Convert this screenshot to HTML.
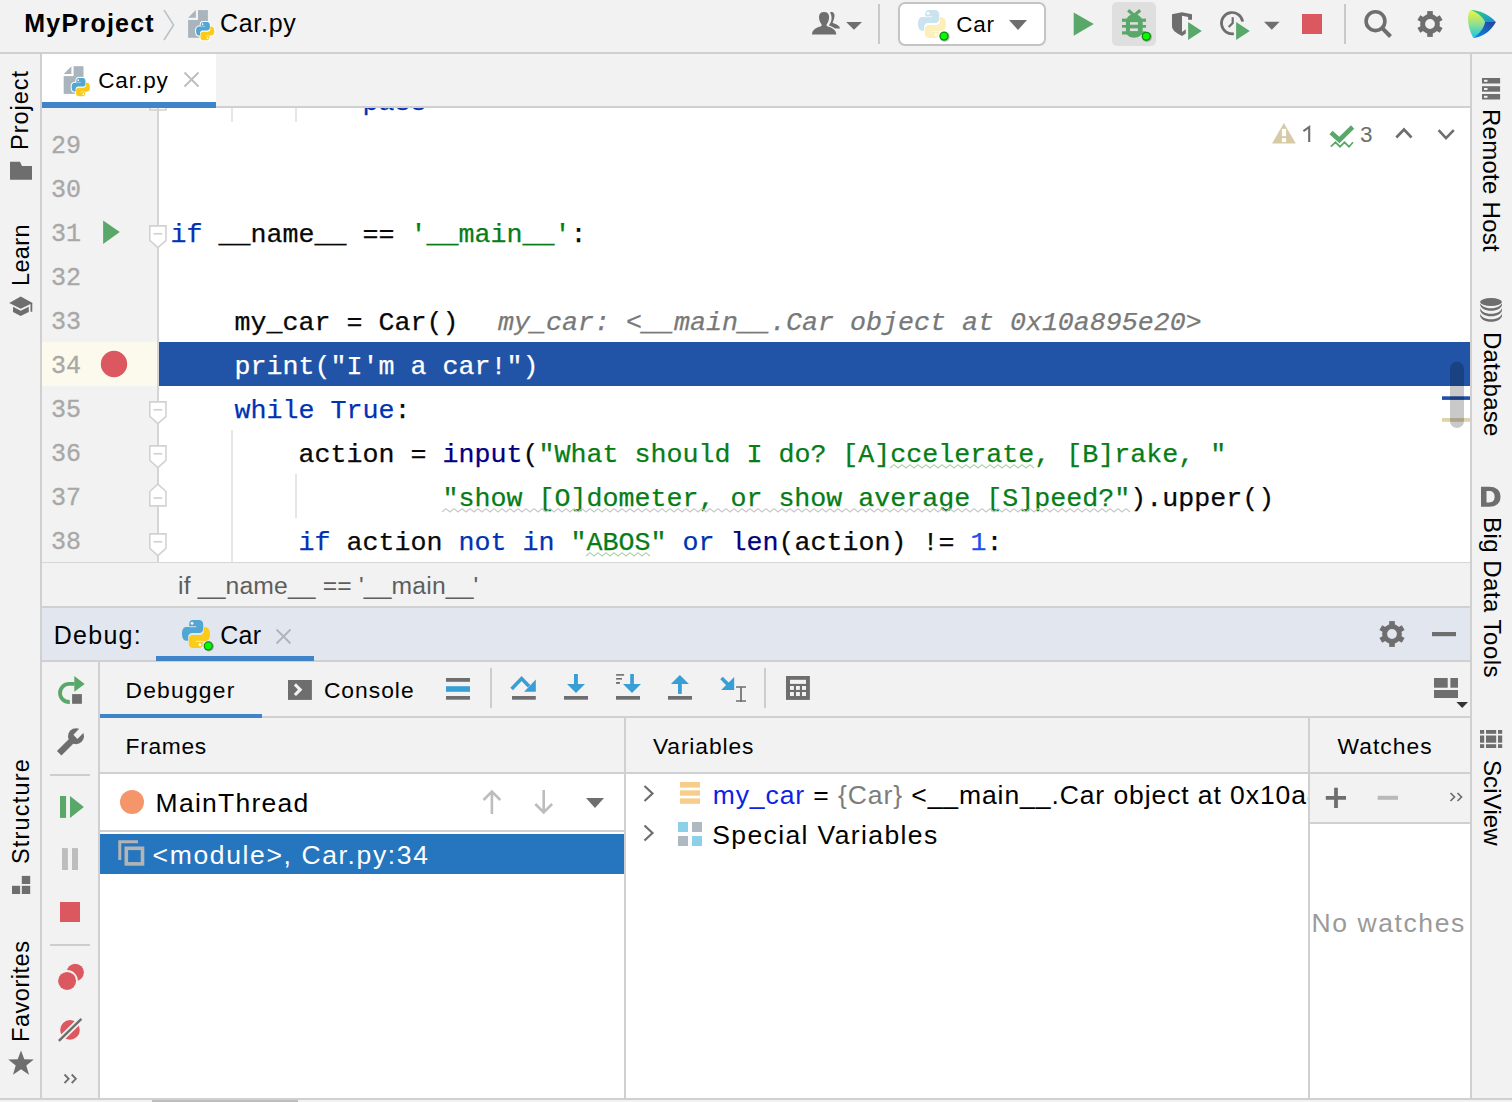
<!DOCTYPE html>
<html><head><meta charset="utf-8">
<style>
*{box-sizing:border-box}
html,body{margin:0;padding:0}
body{width:1512px;height:1102px;position:relative;overflow:hidden;background:#f2f2f2;font-family:"Liberation Sans",sans-serif;color:#000}
.a{position:absolute}
.t{position:absolute;white-space:pre;line-height:1}
.vl{position:absolute;transform-origin:0 0;white-space:pre;line-height:1}
.code{position:absolute;left:170.5px;font-family:"Liberation Mono",monospace;font-size:26.667px;line-height:44px;white-space:pre;color:#080808;height:44px;-webkit-text-stroke:0.25px currentColor}
.kw{color:#0033b3}.st{color:#067d17}.bi{color:#000080}.nu{color:#1750eb}
.ln{position:absolute;left:42px;width:39px;text-align:right;font-family:"Liberation Mono",monospace;font-size:25px;line-height:44px;color:#a8a8a8;height:44px;-webkit-text-stroke:0.3px #a8a8a8}
.bd{position:absolute;background:#d0d0d0}
</style></head><body>

<!-- ===== TOP BAR ===== -->
<div class="bd" style="left:0;top:52px;width:1512px;height:2px"></div>
<div class="t" style="left:24.3px;top:11px;font-size:25px;letter-spacing:1.237px;font-weight:bold">MyProject</div>
<div class="t" style="left:220px;top:11px;font-size:25px;letter-spacing:0.7px">Car.py</div>
<div class="a" style="left:878px;top:4px;width:2px;height:40px;background:#c9c9c9"></div>
<div class="a" style="left:898px;top:2px;width:148px;height:44px;background:#fff;border:2px solid #c4c4c4;border-radius:7px"></div>
<div class="t" style="left:956.3px;top:14px;font-size:22.5px;letter-spacing:0.7px">Car</div>
<div class="a" style="left:1112px;top:2px;width:44px;height:44px;background:#dfdfdf;border-radius:5px"></div>
<div class="a" style="left:1344px;top:4px;width:2px;height:40px;background:#c9c9c9"></div>

<!-- ===== STRIPS ===== -->
<div class="bd" style="left:40px;top:54px;width:2px;height:1044px"></div>
<div class="bd" style="left:1470px;top:54px;width:2px;height:1044px"></div>
<div class="vl" style="left:9.4px;top:150.2px;font-size:23.5px;letter-spacing:1.0px;transform:rotate(-90deg)">Project</div>
<div class="vl" style="left:9.5px;top:286.2px;font-size:23.5px;letter-spacing:0.35px;transform:rotate(-90deg)">Learn</div>
<div class="vl" style="left:9.6px;top:864px;font-size:23.5px;letter-spacing:1.188px;transform:rotate(-90deg)">Structure</div>
<div class="vl" style="left:9.5px;top:1042.3px;font-size:23.5px;letter-spacing:0.537px;transform:rotate(-90deg)">Favorites</div>
<div class="vl" style="left:1503.3px;top:109.3px;font-size:24px;letter-spacing:0.27px;transform:rotate(90deg)">Remote Host</div>
<div class="vl" style="left:1503.6px;top:331.6px;font-size:24px;letter-spacing:0.229px;transform:rotate(90deg)">Database</div>
<div class="vl" style="left:1503.8px;top:517px;font-size:24px;letter-spacing:0.477px;transform:rotate(90deg)">Big Data Tools</div>
<div class="vl" style="left:1503.5px;top:760px;font-size:24px;letter-spacing:0.117px;transform:rotate(90deg)">SciView</div>

<!-- ===== EDITOR TAB BAR ===== -->
<div class="bd" style="left:42px;top:106px;width:1428px;height:2px"></div>
<div class="a" style="left:42px;top:54px;width:174px;height:48px;background:#fff"></div>
<div class="a" style="left:42px;top:102px;width:174px;height:6px;background:#4083c9"></div>
<div class="t" style="left:98.2px;top:70px;font-size:22.5px;letter-spacing:0.92px">Car.py</div>

<!-- ===== EDITOR ===== -->
<div class="a" style="left:0;top:108px;width:1470px;height:454px;overflow:hidden">
 <div class="a" style="left:42px;top:0;width:115px;height:454px;background:#f2f2f2"></div>
 <div class="a" style="left:157px;top:0;width:2px;height:454px;background:#d5d5d5"></div>
 <div class="a" style="left:159px;top:0;width:1311px;height:454px;background:#fff"></div>
 <div class="a" style="left:42px;top:234px;width:115px;height:44px;background:#fcfaed"></div>
 <div class="a" style="left:159px;top:234px;width:1311px;height:44px;background:#2154a6"></div>
 <div class="a" style="left:231px;top:0;width:2px;height:14px;background:#e6e6e6"></div>
 <div class="a" style="left:295px;top:0;width:2px;height:14px;background:#e6e6e6"></div>
 <div class="a" style="left:231px;top:322px;width:2px;height:132px;background:#e6e6e6"></div>
 <div class="a" style="left:295px;top:366px;width:2px;height:44px;background:#e6e6e6"></div>
 <div class="code" style="left:498px;top:193px;color:#787878;font-style:italic">my_car: &lt;__main__.Car object at 0x10a895e20&gt;</div>
<div class="code" style="top:-27px">            <span class="kw">pass</span></div>
<div class="ln" style="top:17px">29</div>
<div class="ln" style="top:61px">30</div>
<div class="code" style="top:105px"><span class="kw">if</span> __name__ == <span class="st">'__main__'</span>:</div>
<div class="ln" style="top:105px">31</div>
<div class="ln" style="top:149px">32</div>
<div class="code" style="top:193px">    my_car = Car()</div>
<div class="ln" style="top:193px">33</div>
<div class="code" style="top:237px;color:#fff">    print("I'm a car!")</div>
<div class="ln" style="top:237px">34</div>
<div class="code" style="top:281px">    <span class="kw">while</span> <span class="kw">True</span>:</div>
<div class="ln" style="top:281px">35</div>
<div class="code" style="top:325px">        action = <span class="bi">input</span>(<span class="st">"What should I do? [A]ccelerate, [B]rake, "</span></div>
<div class="ln" style="top:325px">36</div>
<div class="code" style="top:369px">                 <span class="st">"show [O]dometer, or show average [S]peed?"</span>).upper()</div>
<div class="ln" style="top:369px">37</div>
<div class="code" style="top:413px">        <span class="kw">if</span> action <span class="kw">not in</span> <span class="st">"ABOS"</span> <span class="kw">or</span> <span class="bi">len</span>(action) != <span class="nu">1</span>:</div>
<div class="ln" style="top:413px">38</div>
 <div class="t" style="left:1360px;top:16px;font-size:22.5px;color:#6e6e6e">3</div>
</div>
<div class="a" style="left:42px;top:562px;width:1428px;height:1px;background:#d6d6d6"></div>
<div class="t" style="left:178.1px;top:574px;font-size:24.7px;letter-spacing:0.162px;color:#5e5e5e">if __name__ == '__main__'</div>

<!-- ===== DEBUG ===== -->
<div class="bd" style="left:42px;top:606px;width:1428px;height:2px"></div>
<div class="a" style="left:42px;top:608px;width:1428px;height:52px;background:#e2e6ee"></div>
<div class="bd" style="left:42px;top:660px;width:1428px;height:2px"></div>
<div class="t" style="left:53.8px;top:623px;font-size:25px;letter-spacing:1.24px">Debug:</div>
<div class="t" style="left:220.2px;top:623px;font-size:25px;letter-spacing:0.3px">Car</div>
<div class="a" style="left:156px;top:656px;width:158px;height:5px;background:#4083c9"></div>

<div class="bd" style="left:98px;top:662px;width:2px;height:436px"></div>
<div class="a" style="left:50px;top:774px;width:40px;height:2px;background:#cdcdcd"></div>
<div class="a" style="left:50px;top:944px;width:40px;height:2px;background:#cdcdcd"></div>

<div class="bd" style="left:100px;top:716px;width:1370px;height:2px"></div>
<div class="t" style="left:125.5px;top:679px;font-size:22.8px;letter-spacing:1.229px">Debugger</div>
<div class="a" style="left:100px;top:714px;width:162px;height:4px;background:#4083c9"></div>
<div class="t" style="left:323.9px;top:679px;font-size:22.8px;letter-spacing:1.017px">Console</div>
<div class="a" style="left:490px;top:668px;width:2px;height:40px;background:#cdcdcd"></div>
<div class="a" style="left:764px;top:668px;width:2px;height:40px;background:#cdcdcd"></div>

<div class="t" style="left:125.6px;top:735px;font-size:22.8px;letter-spacing:0.68px">Frames</div>
<div class="bd" style="left:100px;top:772px;width:1370px;height:2px"></div>
<div class="a" style="left:100px;top:774px;width:524px;height:324px;background:#fff"></div>
<div class="t" style="left:155.6px;top:790px;font-size:26.5px;letter-spacing:1.244px">MainThread</div>
<div class="bd" style="left:100px;top:830px;width:524px;height:2px"></div>
<div class="a" style="left:100px;top:834px;width:524px;height:40px;background:#2675bf"></div>
<div class="t" style="left:152.6px;top:842px;font-size:26.5px;letter-spacing:1.628px;color:#fff">&lt;module&gt;, Car.py:34</div>
<div class="bd" style="left:624px;top:718px;width:2px;height:380px"></div>

<div class="t" style="left:652.9px;top:735px;font-size:22.8px;letter-spacing:0.9px">Variables</div>
<div class="a" style="left:626px;top:774px;width:682px;height:324px;background:#fff"></div>
<div class="a" style="left:626px;top:774px;width:682px;height:60px;overflow:hidden">
 <div class="t" style="left:712.7px;top:782px;font-size:26.5px;letter-spacing:0.915px;transform:translate(-626px,-774px)"><span style="color:#0d22e6">my_car</span> = <span style="color:#7d7d7d">{Car}</span> &lt;__main__.Car object at 0x10a895e20&gt;</div>
</div>
<div class="t" style="left:712.3px;top:822px;font-size:26.5px;letter-spacing:1.381px">Special Variables</div>
<div class="bd" style="left:1308px;top:718px;width:2px;height:380px"></div>

<div class="t" style="left:1337.5px;top:735px;font-size:22.8px;letter-spacing:1.033px">Watches</div>
<div class="bd" style="left:1310px;top:822px;width:160px;height:2px"></div>
<div class="a" style="left:1310px;top:824px;width:160px;height:274px;background:#fff"></div>
<div class="t" style="left:1311.5px;top:910px;font-size:26.5px;letter-spacing:1.589px;color:#9a9a9a">No watches</div>

<div class="bd" style="left:0;top:1098px;width:1512px;height:2px"></div>
<div class="a" style="left:152px;top:1100px;width:146px;height:2px;background:#bdbdbd"></div>
<svg class="a" style="left:0;top:0;overflow:visible" width="1512" height="1102" viewBox="0 0 1512 1102">
<defs>
 <symbol id="pyB" viewBox="0 0 28 28" overflow="visible">
  <path d="M11 0H17C19.6 0 21.2 1.7 21.2 4.2V9C21.2 11.3 19.6 13 17.5 13H10.2C7.9 13 6.1 14.8 6.1 17.2V20.8H4.2C1.6 20.8 0 18 0 13.8C0 9.6 1.6 7.1 4.4 7.1H7.2V4.2C7.2 1.6 8.6 0 11 0Z"/>
 </symbol>
 <symbol id="py" viewBox="0 0 28 28" overflow="visible">
  <use href="#pyB" width="28" height="28" fill="#52a6d4"/>
  <use href="#pyB" width="28" height="28" fill="#fbcb1a" transform="rotate(180 14 14)"/>
  <path d="M7.2 6.7H14.2M13.8 21.3H20.8" stroke="#fff" stroke-width="0.9" opacity="0.8"/>
  <circle cx="10.1" cy="3.3" r="1.35" fill="#fff"/><circle cx="17.9" cy="24.7" r="1.35" fill="#fff"/>
 </symbol>
 <symbol id="pyO" viewBox="0 0 28 28" overflow="visible">
  <use href="#pyB" width="28" height="28" fill="#fff" stroke="#fff" stroke-width="3"/>
  <use href="#pyB" width="28" height="28" fill="#fff" stroke="#fff" stroke-width="3" transform="rotate(180 14 14)"/>
 </symbol>
 <symbol id="dot" viewBox="0 0 12 12" overflow="visible">
  <circle cx="6.6" cy="6.6" r="5" fill="#777" opacity="0.55"/>
  <circle cx="6" cy="6" r="4.6" fill="#079107"/>
  <circle cx="6" cy="6" r="3.3" fill="#0af70a"/>
 </symbol>
 <symbol id="gear" viewBox="0 0 26 26" overflow="visible">
  <circle cx="13" cy="13" r="7.4" fill="none" stroke="#6e6e6e" stroke-width="5"/>
  <g fill="#6e6e6e">
   <rect x="10.2" y="0.1" width="5.6" height="5"/><rect x="10.2" y="20.9" width="5.6" height="5"/>
   <g transform="rotate(60 13 13)"><rect x="10.2" y="0.1" width="5.6" height="5"/><rect x="10.2" y="20.9" width="5.6" height="5"/></g>
   <g transform="rotate(120 13 13)"><rect x="10.2" y="0.1" width="5.6" height="5"/><rect x="10.2" y="20.9" width="5.6" height="5"/></g>
  </g>
 </symbol>
 <symbol id="fold" viewBox="0 0 18 24" overflow="visible">
  <path d="M0.9 0.9H17.1V15.3L9 22.6L0.9 15.3Z" fill="#fff" stroke="#d2d2d2" stroke-width="1.6"/>
  <path d="M4.6 8.8H13.4" stroke="#d2d2d2" stroke-width="1.7"/>
 </symbol>
 <linearGradient id="lgL" x1="0" y1="0" x2="0" y2="1"><stop offset="0" stop-color="#f6f43a"/><stop offset="0.5" stop-color="#92e08e"/><stop offset="1" stop-color="#18c6e8"/></linearGradient>
 <linearGradient id="lgT" x1="0" y1="0" x2="1" y2="1"><stop offset="0" stop-color="#30dd68"/><stop offset="1" stop-color="#128ae6"/></linearGradient>
 <linearGradient id="lgR" x1="0" y1="1" x2="1" y2="0"><stop offset="0" stop-color="#0790e6"/><stop offset="1" stop-color="#263f9a"/></linearGradient>
</defs>

<!-- ===== TOP BAR ===== -->
<path d="M164 10L173.6 25L164 40" fill="none" stroke="#b9c1c7" stroke-width="1.5"/>
<g fill="#a9b4bc">
 <path d="M188.1 17.8L195.8 10.1V17.8Z"/>
 <rect x="198" y="10.1" width="9.9" height="9.9"/>
 <rect x="188.1" y="20" width="19.8" height="17.8"/>
</g>
<use href="#pyO" x="196" y="21.9" width="18.3" height="18.3"/>
<use href="#py" x="196" y="21.9" width="18.3" height="18.3"/>

<path d="M829 25.4C829.6 24 830.8 22.5 831.3 20.5C831.8 18 831.8 15 830 12.2C830.5 12 831 12 831.4 12C833.5 12 834.5 13.5 834.5 15.5C834.5 18 833.8 20 832.8 22C832.6 22.6 832.8 23 833.5 23.3C837.5 24.6 839.8 26 840 28.6H835C833 27 831 26 829 25.4Z" fill="#6e6e6e"/>
<path d="M812 34.6C812.3 30 815 28 820.5 26.5C821.8 26 822 25 821.3 24C819.8 22 819 19.5 819 17C819 13.8 821 12 824.1 12C827.2 12 829.1 13.8 829.1 17C829.1 19.5 828.3 22 826.9 24C826.2 25 826.5 26 827.7 26.5C833 28 836 30 836.3 34.6Z" fill="#6e6e6e" stroke="#f2f2f2" stroke-width="1.6" paint-order="stroke"/>
<path d="M846.1 21.9H862L854 29.8Z" fill="#6e6e6e"/>

<g opacity="0.3"><use href="#py" x="918" y="10" width="28" height="28"/></g>
<use href="#dot" x="938" y="30.1" width="12" height="12"/>
<path d="M1009 20H1027L1018 30Z" fill="#6e6e6e"/>

<path d="M1073.7 12.4L1093.8 24L1073.7 35.7Z" fill="#59a869"/>
<g fill="#59a869">
 <path d="M1128.2 10.3L1134.2 15.5L1140.2 10.3" fill="none" stroke="#59a869" stroke-width="3.2"/>
 <path d="M1134 14C1138.5 14 1142.7 17.5 1142.7 23V31C1142.7 35 1138.5 37.7 1134 37.7C1129.5 37.7 1125.9 35 1125.9 31V23C1125.9 17.5 1129.5 14 1134 14Z"/>
 <rect x="1122" y="18.6" width="24" height="3.2"/><rect x="1122" y="25" width="24" height="2.7"/><rect x="1122" y="31.3" width="24" height="3.2"/>
</g>
<rect x="1130" y="22.2" width="7.9" height="2.5" fill="#dfdfdf"/><rect x="1130" y="28.4" width="7.9" height="2.7" fill="#dfdfdf"/>
<use href="#dot" x="1140.3" y="30.3" width="12" height="12"/>

<path d="M1172 14.2L1182 12.2L1192 14.2V19.8H1188.1V16.9L1182 15.8V32.1L1185.8 29.2V33.6L1182 36C1176 33 1172 30 1172 26Z" fill="#6e6e6e"/>
<path d="M1188.1 22L1201.8 30.9L1188.1 39.9Z" fill="#59a869" stroke="#f2f2f2" stroke-width="1.2" paint-order="stroke"/>

<path d="M1242.65 21.6A10.65 10.65 0 1 0 1233.8 33.7" fill="none" stroke="#6e6e6e" stroke-width="2.7"/>
<path d="M1232.7 17.3V23.1L1228.7 27" fill="none" stroke="#6e6e6e" stroke-width="2.2"/>
<path d="M1236.1 22L1249.8 30.9L1236.1 39.9Z" fill="#59a869" stroke="#f2f2f2" stroke-width="1.2" paint-order="stroke"/>
<path d="M1264 21.8H1279.6L1271.8 29.8Z" fill="#6e6e6e"/>
<rect x="1302" y="14" width="20" height="20" fill="#db5860"/>

<circle cx="1375.5" cy="21.2" r="9.4" fill="none" stroke="#6e6e6e" stroke-width="3.6"/>
<path d="M1382 27.8L1390.5 36.5" stroke="#6e6e6e" stroke-width="4"/>
<use href="#gear" x="1417" y="11" width="26" height="26"/>

<path d="M1470.7 10C1477 12.5 1483 17 1485 22C1484 28 1479 34 1473.3 37.9C1469.5 31 1467.8 24 1468 17C1468.2 14 1469.2 11.5 1470.7 10Z" fill="url(#lgL)"/>
<path d="M1470.7 10C1480 10 1490 15 1495.9 22H1485C1483 17 1477 12.5 1470.7 10Z" fill="url(#lgT)"/>
<path d="M1485 22H1495.9C1491 31 1482 37.5 1473.3 37.9C1479 34 1484 28 1485 22Z" fill="url(#lgR)"/>

<!-- ===== LEFT STRIP ICONS ===== -->
<path d="M10 161.7H20L22 166H32V179.7H10Z" fill="#6e6e6e"/>
<path d="M20.7 296.5L32.6 303L20.7 308.8L9.2 303Z" fill="#6e6e6e"/>
<path d="M31.4 303V311.7" stroke="#6e6e6e" stroke-width="1.8"/>
<path d="M13 306.8L20.7 310.8L28.8 306.8V312L20.7 316L13 312Z" fill="#6e6e6e"/>
<g fill="#6e6e6e">
 <rect x="21.8" y="875.9" width="8.4" height="8.1"/><rect x="12" y="885.8" width="8.1" height="8.2"/><rect x="21.8" y="885.8" width="8.4" height="8.2"/>
</g>
<path d="M21 1050.4L24.3 1059.3L33.8 1059.6L26.3 1065.4L29 1074.8L21 1069.3L13 1074.8L15.7 1065.4L8.2 1059.6L17.7 1059.3Z" fill="#6e6e6e"/>

<!-- ===== RIGHT STRIP ICONS ===== -->
<g fill="#6e6e6e">
 <rect x="1482" y="78" width="18.1" height="5.5"/><rect x="1482" y="86.2" width="18.1" height="5.5"/><rect x="1482" y="94" width="18.1" height="5.5"/>
</g>
<g fill="#f2f2f2">
 <rect x="1484" y="79.8" width="3.5" height="2"/><rect x="1484" y="88" width="3.5" height="2"/><rect x="1484" y="95.8" width="3.5" height="2"/>
</g>
<g fill="#6e6e6e" stroke="#f2f2f2" stroke-width="1.2" paint-order="stroke">
 <path d="M1480.2 315.5C1480.2 318.8 1485 321.8 1491 321.8C1497 321.8 1502 318.8 1502 315.5V313C1502 316.3 1497 319.3 1491 319.3C1485 319.3 1480.2 316.3 1480.2 313Z"/>
 <path d="M1480.2 310C1480.2 313.3 1485 316.3 1491 316.3C1497 316.3 1502 313.3 1502 310V307.5C1502 310.8 1497 313.8 1491 313.8C1485 313.8 1480.2 310.8 1480.2 307.5Z"/>
 <path d="M1480.2 304.5C1480.2 307.8 1485 310.8 1491 310.8C1497 310.8 1502 307.8 1502 304.5V302C1502 305.3 1497 308.3 1491 308.3C1485 308.3 1480.2 305.3 1480.2 302Z"/>
 <ellipse cx="1491" cy="302" rx="10.9" ry="4"/>
</g>
<path d="M1481 486.7H1489C1496 486.7 1500.5 490 1500.5 496.7C1500.5 503.4 1496 506.7 1489 506.7H1481ZM1486.5 491V502.4H1489C1492.6 502.4 1494.6 500.6 1494.6 496.7C1494.6 492.8 1492.6 491 1489 491Z" fill="#6e6e6e" fill-rule="evenodd"/>
<g fill="#6e6e6e">
 <rect x="1480" y="730" width="4.2" height="3.8"/><rect x="1486" y="730" width="10.2" height="3.8"/><rect x="1498" y="730" width="4.2" height="3.8"/>
 <rect x="1480" y="735.5" width="4.2" height="7.2"/><rect x="1486" y="735.5" width="10.2" height="7.2"/><rect x="1498" y="735.5" width="4.2" height="7.2"/>
 <rect x="1480" y="744.2" width="4.2" height="3.8"/><rect x="1486" y="744.2" width="10.2" height="3.8"/><rect x="1498" y="744.2" width="4.2" height="3.8"/>
</g>

<!-- ===== TAB ICON ===== -->
<g fill="#a9b4bc">
 <path d="M63.7 73.9L71.4 66.2V73.9Z"/>
 <rect x="73.6" y="66.2" width="9.9" height="9.9"/>
 <rect x="63.7" y="76.1" width="19.8" height="17.8"/>
</g>
<use href="#pyO" x="71.6" y="78" width="18.3" height="18.3"/>
<use href="#py" x="71.6" y="78" width="18.3" height="18.3"/>
<path d="M184.5 72.5L198.5 86.5M198.5 72.5L184.5 86.5" stroke="#b9bec2" stroke-width="1.8"/>

<!-- ===== EDITOR GUTTER ===== -->
<path d="M103.1 220.4L119.8 232L103.1 244Z" fill="#59a869"/>
<circle cx="114" cy="364" r="13.2" fill="#db5860"/>
<path d="M149.9 108V110H166V108" fill="none" stroke="#d2d2d2" stroke-width="1.6"/>
<use href="#fold" x="148.9" y="225" width="18" height="24"/>
<use href="#fold" x="148.9" y="401" width="18" height="24"/>
<use href="#fold" x="148.9" y="445" width="18" height="24"/>
<use href="#fold" x="148.9" y="533" width="18" height="24"/>
<g transform="translate(0 991) scale(1 -1)"><use href="#fold" x="148.9" y="484.2" width="18" height="24"/></g>

<!-- inspections -->
<path d="M1303.4 131.2L1309.2 127V142.1" fill="none" stroke="#6e6e6e" stroke-width="2.1"/>
<path d="M1283.9 122.9L1295.8 143.4H1272Z" fill="#d6cba4"/>
<rect x="1281.9" y="128.9" width="4.2" height="7.3" fill="#fff"/><rect x="1281.9" y="138.1" width="4.2" height="4" fill="#fff"/>
<path d="M1331 132.5L1339.4 140L1352.6 127" fill="none" stroke="#59a869" stroke-width="4.6"/>
<path d="M1330.8 146.7L1335.5 142.3L1340 146.7L1344.5 142.3L1349 146.7L1353 142.3" fill="none" stroke="#59a869" stroke-width="1.7"/>
<path d="M1396.3 137.5L1404 129.5L1411.5 137.5" fill="none" stroke="#6e6e6e" stroke-width="2.6"/>
<path d="M1438.6 130.2L1446 138.2L1453.8 130.2" fill="none" stroke="#6e6e6e" stroke-width="2.6"/>
<!-- scrollbar -->
<rect x="1442" y="396.3" width="28" height="3.6" fill="#1f4fa8"/>
<rect x="1442" y="418" width="28" height="3.8" fill="#ddd3ad"/>
<rect x="1450" y="361.8" width="14" height="66.2" rx="7" fill="#000" opacity="0.21"/>

<!-- ===== DEBUG HEADER ICONS ===== -->
<use href="#py" x="182" y="620" width="28" height="28"/>
<use href="#dot" x="202.3" y="639.9" width="12" height="12"/>
<path d="M276.5 629.5L290.5 643.5M290.5 629.5L276.5 643.5" stroke="#b0b4b8" stroke-width="1.8"/>
<use href="#gear" x="1379" y="621" width="26" height="26"/>
<rect x="1432" y="632" width="24" height="4.2" fill="#6e6e6e"/>

<!-- ===== DEBUG LEFT STRIP ===== -->
<path d="M74.6 683.9H69.05A9.05 9.05 0 0 0 69.05 702H69.8" fill="none" stroke="#59a869" stroke-width="3.8"/>
<path d="M74.3 676L84.7 684L74.3 691.8Z" fill="#59a869"/>
<rect x="72.1" y="694.1" width="9.8" height="9.7" fill="#6e6e6e" stroke="#f2f2f2" stroke-width="1.2" paint-order="stroke"/>

<path d="M59.2 753.3L72 740.5" stroke="#6e6e6e" stroke-width="6.4"/>
<circle cx="76" cy="736.2" r="8" fill="#6e6e6e"/>
<path d="M73.4 734.7L77.4 738.9L86 730.3L81.8 726Z" fill="#f2f2f2"/>

<rect x="60" y="796" width="6.05" height="21.9" fill="#59a869"/>
<path d="M70 796L83.9 806.9L70 817.9Z" fill="#59a869"/>
<rect x="62" y="848.1" width="5.9" height="21.9" fill="#bdbdbd"/><rect x="72" y="848.1" width="6" height="21.9" fill="#bdbdbd"/>
<rect x="60" y="902" width="20" height="20" fill="#db5860"/>
<circle cx="75.3" cy="972.3" r="8.6" fill="#db5860"/>
<circle cx="67.1" cy="980.9" r="9" fill="#db5860" stroke="#f2f2f2" stroke-width="3.6" paint-order="stroke"/>
<circle cx="70" cy="1029.9" r="9.8" fill="#db5860"/>
<path d="M58.9 1040.9L81.4 1018.9" stroke="#f2f2f2" stroke-width="6.2"/>
<path d="M58.9 1040.9L81.4 1018.9" stroke="#6e6e6e" stroke-width="2.4"/>
<path d="M64.5 1074.5L68.7 1078.8L64.5 1083M71.7 1074.5L75.9 1078.8L71.7 1083" fill="none" stroke="#6e6e6e" stroke-width="1.8"/>

<!-- squiggles -->
<path d="M890.0 468.0 L894.0 464.6 L898.0 468.0 L902.0 464.6 L906.0 468.0 L910.0 464.6 L914.0 468.0 L918.0 464.6 L922.0 468.0 L926.0 464.6 L930.0 468.0 L934.0 464.6 L938.0 468.0 L942.0 464.6 L946.0 468.0 L950.0 464.6 L954.0 468.0 L958.0 464.6 L962.0 468.0 L966.0 464.6 L970.0 468.0 L974.0 464.6 L978.0 468.0 L982.0 464.6 L986.0 468.0 L990.0 464.6 L994.0 468.0 L998.0 464.6 L1002.0 468.0 L1006.0 464.6 L1010.0 468.0 L1014.0 464.6 L1018.0 468.0 L1022.0 464.6 L1026.0 468.0 L1030.0 464.6 L1034.0 468.0" fill="none" stroke="#a9d3a9" stroke-width="1.1"/>
<path d="M442.0 512.0 L446.0 508.6 L450.0 512.0 L454.0 508.6 L458.0 512.0 L462.0 508.6 L466.0 512.0 L470.0 508.6 L474.0 512.0 L478.0 508.6 L482.0 512.0 L486.0 508.6 L490.0 512.0 L494.0 508.6 L498.0 512.0 L502.0 508.6 L506.0 512.0 L510.0 508.6 L514.0 512.0 L518.0 508.6 L522.0 512.0 L526.0 508.6 L530.0 512.0 L534.0 508.6 L538.0 512.0 L542.0 508.6 L546.0 512.0 L550.0 508.6 L554.0 512.0 L558.0 508.6 L562.0 512.0 L566.0 508.6 L570.0 512.0 L574.0 508.6 L578.0 512.0 L582.0 508.6 L586.0 512.0 L590.0 508.6 L594.0 512.0 L598.0 508.6 L602.0 512.0 L606.0 508.6 L610.0 512.0 L614.0 508.6 L618.0 512.0 L622.0 508.6 L626.0 512.0 L630.0 508.6 L634.0 512.0 L638.0 508.6 L642.0 512.0 L646.0 508.6 L650.0 512.0 L654.0 508.6 L658.0 512.0 L662.0 508.6 L666.0 512.0 L670.0 508.6 L674.0 512.0 L678.0 508.6 L682.0 512.0 L686.0 508.6 L690.0 512.0 L694.0 508.6 L698.0 512.0 L702.0 508.6 L706.0 512.0 L710.0 508.6 L714.0 512.0 L718.0 508.6 L722.0 512.0 L726.0 508.6 L730.0 512.0 L734.0 508.6 L738.0 512.0 L742.0 508.6 L746.0 512.0 L750.0 508.6 L754.0 512.0 L758.0 508.6 L762.0 512.0 L766.0 508.6 L770.0 512.0 L774.0 508.6 L778.0 512.0 L782.0 508.6 L786.0 512.0 L790.0 508.6 L794.0 512.0 L798.0 508.6 L802.0 512.0 L806.0 508.6 L810.0 512.0 L814.0 508.6 L818.0 512.0 L822.0 508.6 L826.0 512.0 L830.0 508.6 L834.0 512.0 L838.0 508.6 L842.0 512.0 L846.0 508.6 L850.0 512.0 L854.0 508.6 L858.0 512.0 L862.0 508.6 L866.0 512.0 L870.0 508.6 L874.0 512.0 L878.0 508.6 L882.0 512.0 L886.0 508.6 L890.0 512.0 L894.0 508.6 L898.0 512.0 L902.0 508.6 L906.0 512.0 L910.0 508.6 L914.0 512.0 L918.0 508.6 L922.0 512.0 L926.0 508.6 L930.0 512.0 L934.0 508.6 L938.0 512.0 L942.0 508.6 L946.0 512.0 L950.0 508.6 L954.0 512.0 L958.0 508.6 L962.0 512.0 L966.0 508.6 L970.0 512.0 L974.0 508.6 L978.0 512.0 L982.0 508.6 L986.0 512.0 L990.0 508.6 L994.0 512.0 L998.0 508.6 L1002.0 512.0 L1006.0 508.6 L1010.0 512.0 L1014.0 508.6 L1018.0 512.0 L1022.0 508.6 L1026.0 512.0 L1030.0 508.6 L1034.0 512.0 L1038.0 508.6 L1042.0 512.0 L1046.0 508.6 L1050.0 512.0 L1054.0 508.6 L1058.0 512.0 L1062.0 508.6 L1066.0 512.0 L1070.0 508.6 L1074.0 512.0 L1078.0 508.6 L1082.0 512.0 L1086.0 508.6 L1090.0 512.0 L1094.0 508.6 L1098.0 512.0 L1102.0 508.6 L1106.0 512.0 L1110.0 508.6 L1114.0 512.0 L1118.0 508.6 L1122.0 512.0 L1126.0 508.6 L1130.0 512.0" fill="none" stroke="#c6c6c6" stroke-width="1.1"/>
<path d="M586.0 556.0 L590.0 552.6 L594.0 556.0 L598.0 552.6 L602.0 556.0 L606.0 552.6 L610.0 556.0 L614.0 552.6 L618.0 556.0 L622.0 552.6 L626.0 556.0 L630.0 552.6 L634.0 556.0 L638.0 552.6 L642.0 556.0 L646.0 552.6 L650.0 556.0" fill="none" stroke="#a9d3a9" stroke-width="1.1"/>
<!-- ===== TOOLBAR ===== -->
<rect x="288" y="680" width="23.9" height="19.9" fill="#6e6e6e"/>
<path d="M294.9 684.4L300.2 689.7L294.9 695" fill="none" stroke="#f2f2f2" stroke-width="3.1"/>
<rect x="446" y="678" width="24" height="3.8" fill="#6e6e6e"/><rect x="446" y="686.2" width="24" height="5.6" fill="#389fd6"/><rect x="446" y="696" width="24" height="3.7" fill="#6e6e6e"/>

<path d="M511.6 689L521.6 678.6L529 686.2" fill="none" stroke="#389fd6" stroke-width="3.6"/>
<path d="M524.1 691.8H535.8V679.6Z" fill="#389fd6"/>
<rect x="512" y="696" width="23.8" height="3.7" fill="#6e6e6e"/>

<rect x="574" y="674" width="3.9" height="11" fill="#389fd6"/><path d="M567 684.1H585L576 693Z" fill="#389fd6"/>
<rect x="564" y="696" width="24" height="3.7" fill="#6e6e6e"/>

<rect x="616.1" y="674.1" width="8" height="1.6" fill="#6e6e6e"/><rect x="616.1" y="678" width="5.9" height="1.6" fill="#6e6e6e"/><rect x="616.1" y="682" width="3.8" height="1.9" fill="#6e6e6e"/>
<rect x="630.2" y="674" width="3.7" height="11" fill="#389fd6"/><path d="M623 684.1H641L632 693Z" fill="#389fd6"/>
<rect x="616" y="696" width="24" height="3.7" fill="#6e6e6e"/>

<path d="M670.9 684.1H688.9L679.9 674.9Z" fill="#389fd6"/><rect x="678" y="683.5" width="3.8" height="10.4" fill="#389fd6"/>
<rect x="668" y="696" width="24" height="3.7" fill="#6e6e6e"/>

<path d="M721.5 678L729.2 685.6" stroke="#389fd6" stroke-width="3.6"/>
<path d="M721.2 690H734.2V677Z" fill="#389fd6"/>
<path d="M736 687H746M741 686.2V701.9M736 701H746" fill="none" stroke="#6e6e6e" stroke-width="1.7"/>

<rect x="786" y="676" width="23.9" height="23.9" fill="#6e6e6e"/>
<g fill="#f2f2f2">
 <rect x="790" y="679.8" width="16" height="4.1"/>
 <rect x="790" y="686" width="3.9" height="3.9"/><rect x="796" y="686" width="3.9" height="3.9"/><rect x="802" y="686" width="4" height="3.9"/>
 <rect x="790" y="692" width="3.9" height="4"/><rect x="796" y="692" width="3.9" height="4"/><rect x="802" y="692" width="4" height="4"/>
</g>
<g fill="#6e6e6e">
 <rect x="1434" y="678" width="13.7" height="9.7"/><rect x="1450.4" y="678" width="7.6" height="9.7"/><rect x="1434" y="690" width="24" height="8"/>
</g>
<path d="M1456.4 702H1468L1462.2 708Z" fill="#333"/>

<!-- ===== FRAMES ===== -->
<circle cx="132" cy="802" r="12" fill="#f4956a"/>
<path d="M483.5 800L491.9 791.5L500.3 800M491.9 791.8V814" fill="none" stroke="#bdbdbd" stroke-width="2.6"/>
<path d="M535.3 804L543.7 812.5L552.1 804M543.7 812.2V790" fill="none" stroke="#bdbdbd" stroke-width="2.6"/>
<path d="M586 798H604L595 808Z" fill="#6e6e6e"/>
<path d="M119.8 860V841.8H138" fill="none" stroke="#b4b4b4" stroke-width="3"/>
<rect x="126.3" y="848.3" width="16.2" height="15.6" fill="none" stroke="#b4b4b4" stroke-width="3.6"/>

<!-- ===== VARIABLES ===== -->
<path d="M644.5 786L652.5 793.5L644.5 801" fill="none" stroke="#6e6e6e" stroke-width="2.2"/>
<g fill="#f7cd8b"><rect x="680" y="782" width="20" height="5.6"/><rect x="680" y="790.3" width="20" height="5.4"/><rect x="680" y="798.4" width="20" height="5.4"/></g>
<path d="M644.5 825.5L652.5 833L644.5 840.5" fill="none" stroke="#6e6e6e" stroke-width="2.2"/>
<rect x="678" y="822" width="10" height="10" fill="#8dd0ea"/><rect x="692" y="822" width="10" height="10" fill="#aeb9c0"/>
<rect x="678" y="836" width="10" height="10" fill="#aeb9c0"/><rect x="692" y="836" width="10" height="10" fill="#8dd0ea"/>

<!-- ===== WATCHES ===== -->
<path d="M1336 787.7V808M1325.8 797.9H1346" stroke="#6e6e6e" stroke-width="3.8"/>
<rect x="1377.7" y="795.8" width="20.3" height="4" fill="#b9b9b9"/>
<path d="M1450.5 793L1454.5 797L1450.5 801M1457.5 793L1461.5 797L1457.5 801" fill="none" stroke="#6e6e6e" stroke-width="1.7"/>
</svg>
</body></html>
